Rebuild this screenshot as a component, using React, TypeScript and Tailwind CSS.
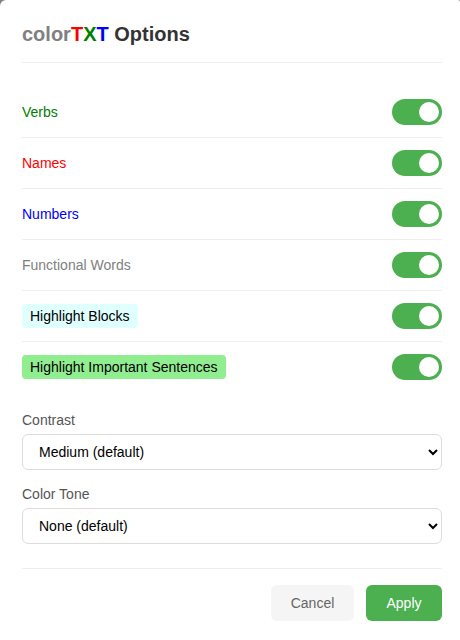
const rows = [
  { label: "Verbs", labelClass: "text-[#008000]" },
  { label: "Names", labelClass: "text-[#ff0000]" },
  { label: "Numbers", labelClass: "text-[#0000ff]" },
  { label: "Functional Words", labelClass: "text-[#808080]" },
  { label: "Highlight Blocks", labelClass: "text-black bg-[#e0ffff] px-2 py-[3px] leading-[18px] rounded" },
  { label: "Highlight Important Sentences", labelClass: "text-black bg-[#90ee90] px-2 py-[3px] leading-[18px] rounded" },
]

function Toggle() {
  return (
    <div className="w-[50px] h-[26px] rounded-full bg-[#4caf50] flex items-center justify-end pr-[3px] shrink-0">
      <div className="w-5 h-5 rounded-full bg-white" />
    </div>
  )
}

function Field({ label, value }: { label: string; value: string }) {
  return (
    <div className="mb-4">
      <div className="text-sm text-[#555555] mb-1.5 leading-4">{label}</div>
      <select className="w-full h-9 px-3 text-sm text-black bg-white border border-[#dddddd] rounded-md" defaultValue={value}>
        <option>{value}</option>
      </select>
    </div>
  )
}

export default function App() {
  return (
    <div className="w-[460px] h-[640px] bg-[#808080] overflow-hidden">
      <div className="h-full bg-white pl-[22px] pr-[18px] rounded-tl-[6px] rounded-tr-[2px] font-['Liberation_Sans',Arial,sans-serif]">
        <h1 className="pt-[22px] pb-4 text-xl leading-6 font-bold text-[#333333] border-b border-[#eeeeee] mb-6">
          <span className="text-[#808080]">color</span>
          <span className="text-[#ff0000]">T</span>
          <span className="text-[#008000]">X</span>
          <span className="text-[#0000ff]">T</span> Options
        </h1>
        <div>
          {rows.map((row, i) => (
            <div
              key={row.label}
              className={`flex items-center justify-between h-[51px] border-b ${i < rows.length - 1 ? "border-[#eeeeee]" : "border-transparent"}`}
            >
              <span className={`text-sm leading-5 ${row.labelClass}`}>{row.label}</span>
              <Toggle />
            </div>
          ))}
        </div>
        <div className="mt-[19px]">
          <Field label="Contrast" value="Medium (default)" />
          <Field label="Color Tone" value="None (default)" />
        </div>
        <div className="flex justify-end gap-3 border-t border-[#eeeeee] pt-4 mt-6">
          <button className="h-9 w-[83px] rounded-md bg-[#f5f5f5] text-sm text-[#666666]">Cancel</button>
          <button className="h-9 w-[76px] rounded-md bg-[#4caf50] text-sm font-medium text-white">Apply</button>
        </div>
      </div>
    </div>
  )
}
